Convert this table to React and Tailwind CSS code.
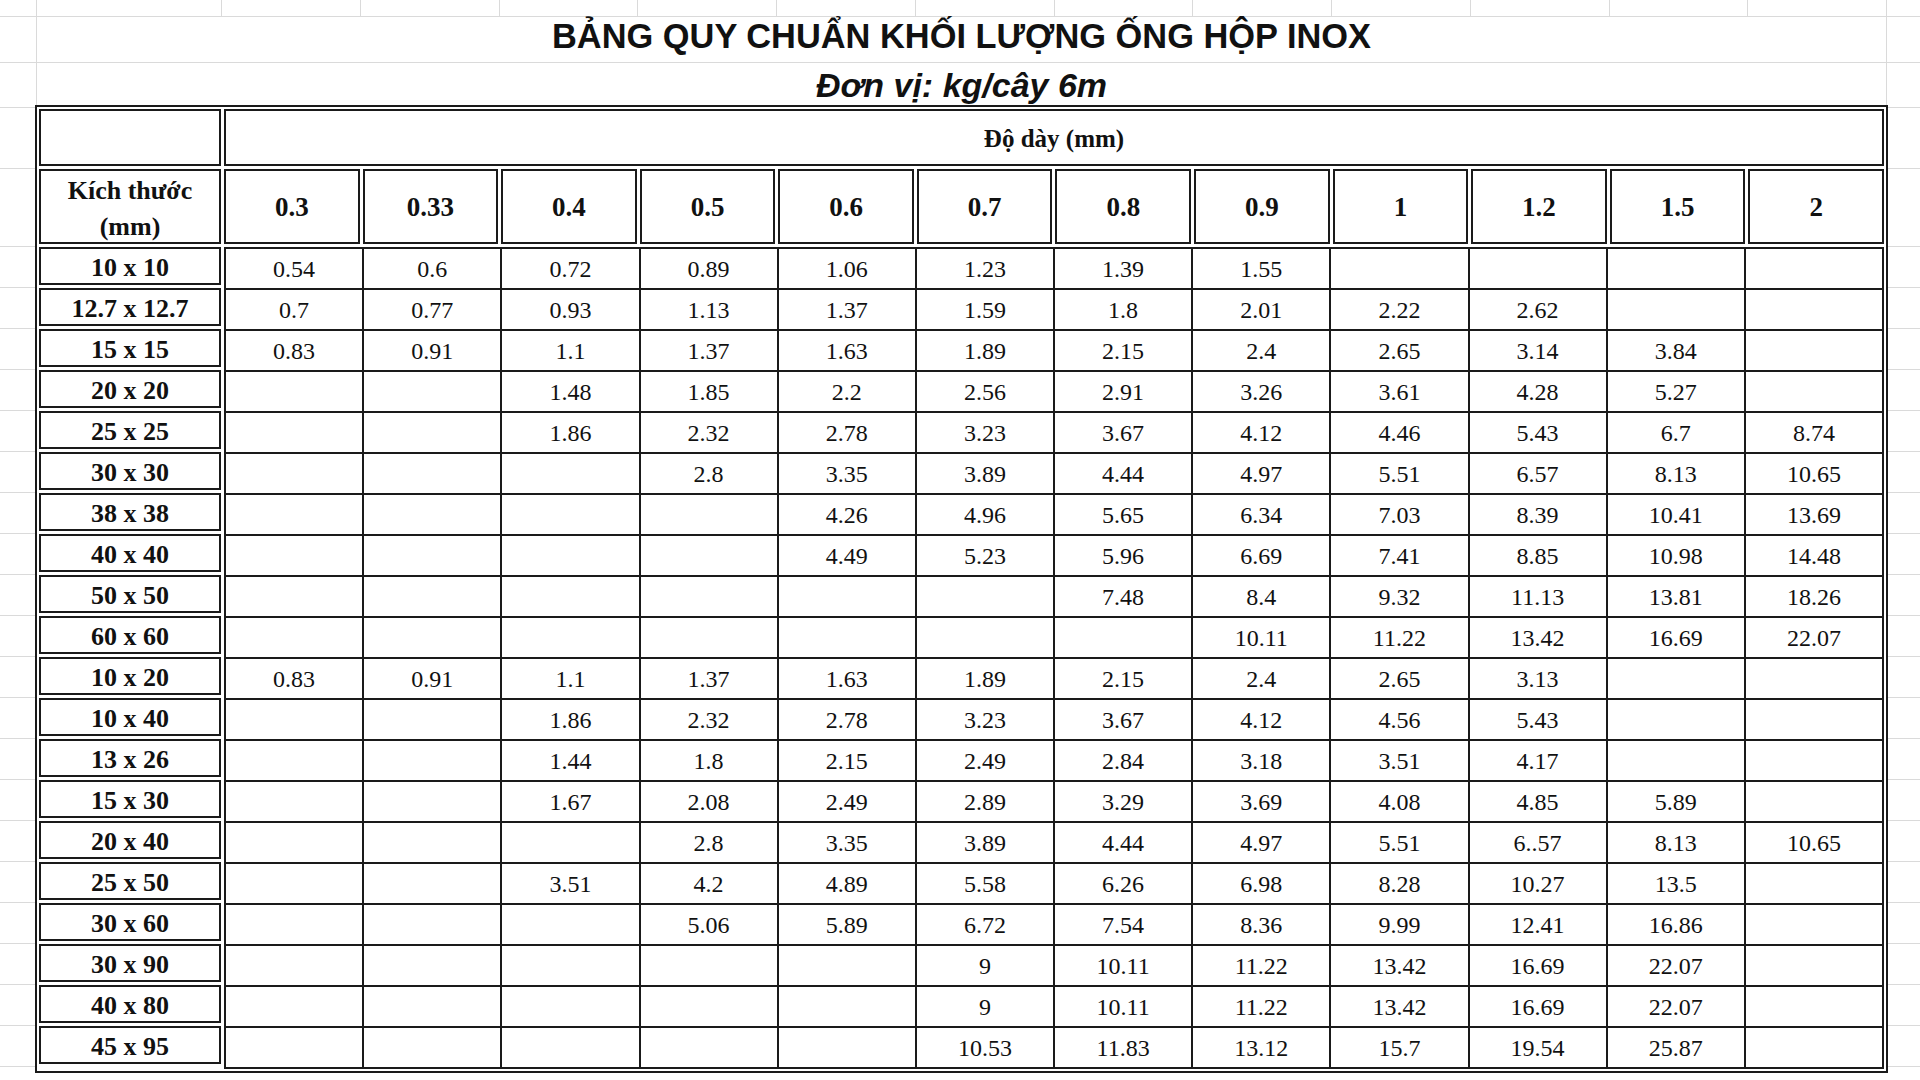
// App.jsx
const COLS = ['0.3', '0.33', '0.4', '0.5', '0.6', '0.7', '0.8', '0.9', '1', '1.2', '1.5', '2']

const ROWS = [
  ['10 x 10', ['0.54', '0.6', '0.72', '0.89', '1.06', '1.23', '1.39', '1.55', '', '', '', '']],
  ['12.7 x 12.7', ['0.7', '0.77', '0.93', '1.13', '1.37', '1.59', '1.8', '2.01', '2.22', '2.62', '', '']],
  ['15 x 15', ['0.83', '0.91', '1.1', '1.37', '1.63', '1.89', '2.15', '2.4', '2.65', '3.14', '3.84', '']],
  ['20 x 20', ['', '', '1.48', '1.85', '2.2', '2.56', '2.91', '3.26', '3.61', '4.28', '5.27', '']],
  ['25 x 25', ['', '', '1.86', '2.32', '2.78', '3.23', '3.67', '4.12', '4.46', '5.43', '6.7', '8.74']],
  ['30 x 30', ['', '', '', '2.8', '3.35', '3.89', '4.44', '4.97', '5.51', '6.57', '8.13', '10.65']],
  ['38 x 38', ['', '', '', '', '4.26', '4.96', '5.65', '6.34', '7.03', '8.39', '10.41', '13.69']],
  ['40 x 40', ['', '', '', '', '4.49', '5.23', '5.96', '6.69', '7.41', '8.85', '10.98', '14.48']],
  ['50 x 50', ['', '', '', '', '', '', '7.48', '8.4', '9.32', '11.13', '13.81', '18.26']],
  ['60 x 60', ['', '', '', '', '', '', '', '10.11', '11.22', '13.42', '16.69', '22.07']],
  ['10 x 20', ['0.83', '0.91', '1.1', '1.37', '1.63', '1.89', '2.15', '2.4', '2.65', '3.13', '', '']],
  ['10 x 40', ['', '', '1.86', '2.32', '2.78', '3.23', '3.67', '4.12', '4.56', '5.43', '', '']],
  ['13 x 26', ['', '', '1.44', '1.8', '2.15', '2.49', '2.84', '3.18', '3.51', '4.17', '', '']],
  ['15 x 30', ['', '', '1.67', '2.08', '2.49', '2.89', '3.29', '3.69', '4.08', '4.85', '5.89', '']],
  ['20 x 40', ['', '', '', '2.8', '3.35', '3.89', '4.44', '4.97', '5.51', '6..57', '8.13', '10.65']],
  ['25 x 50', ['', '', '3.51', '4.2', '4.89', '5.58', '6.26', '6.98', '8.28', '10.27', '13.5', '']],
  ['30 x 60', ['', '', '', '5.06', '5.89', '6.72', '7.54', '8.36', '9.99', '12.41', '16.86', '']],
  ['30 x 90', ['', '', '', '', '', '9', '10.11', '11.22', '13.42', '16.69', '22.07', '']],
  ['40 x 80', ['', '', '', '', '', '9', '10.11', '11.22', '13.42', '16.69', '22.07', '']],
  ['45 x 95', ['', '', '', '', '', '10.53', '11.83', '13.12', '15.7', '19.54', '25.87', '']],
]

const serif = { fontFamily: '"Liberation Serif", "Times New Roman", serif' }
const sans = { fontFamily: '"Liberation Sans", Arial, sans-serif' }

// excel gridlines on the sides of the table
function Gutter({ w }) {
  return (
    <div className={`${w} flex flex-col shrink-0`}>
      <div className="h-[3px] border-b border-[#dadada]" />
      <div className="h-[61px] border-b border-[#dadada]" />
      <div className="h-[78px] border-b border-[#dadada]" />
      {ROWS.map((r, i) => <div key={i} className="h-[41px] border-b border-[#dadada]" />)}
    </div>
  )
}

export default function App() {
  return (
    <div className="w-[1920px] h-[1080px] bg-white overflow-hidden text-[#111]" style={serif}>
      {/* top sheet row */}
      <div className="h-[17px] flex border-b border-[#dadada]">
        <div className="w-[37px] border-r border-[#dadada]" />
        <div className="w-[185px] border-r border-[#dadada]" />
        {COLS.map(c => <div key={c} className="w-[138.75px] border-r border-[#dadada]" />)}
        <div className="flex-1" />
      </div>

      {/* title */}
      <div className="h-[46px] flex border-b border-[#dadada]">
        <div className="w-[37px] border-r border-[#dadada]" />
        <div className="w-[1850px] border-r border-[#dadada] text-center text-[34.4px] leading-[38px] font-bold" style={sans}>
          BẢNG QUY CHUẨN KHỐI LƯỢNG ỐNG HỘP INOX
        </div>
        <div className="flex-1" />
      </div>

      {/* unit */}
      <div className="h-[42px] flex">
        <div className="w-[37px] border-r border-[#dadada]" />
        <div className="w-[1850px] border-r border-[#dadada] text-center text-[34px] leading-[38px] font-bold italic pt-[3px]" style={sans}>
          Đơn vị: kg/cây 6m
        </div>
        <div className="flex-1" />
      </div>

      <div className="flex">
        <Gutter w="w-[35px]" />

        <div className="w-[1853px] shrink-0 border-2 border-[#1a1a1a] p-[2px] flex flex-col gap-[3px]">
          <div className="flex gap-[3px] h-[57px]">
            <div className="w-[182px] border-2 border-[#1a1a1a]" />
            <div className="flex-1 border-2 border-[#1a1a1a] flex items-center justify-center text-[25px] font-bold pt-[2px]">
              Độ dày (mm)
            </div>
          </div>

          <div className="flex gap-[3px] h-[75px]">
            <div className="w-[182px] border-2 border-[#1a1a1a] flex flex-col items-center justify-center text-[26px] leading-[36px] font-bold pt-[4px]">
              <span>Kích thước</span>
              <span>(mm)</span>
            </div>
            {COLS.map(c => (
              <div key={c} className="flex-1 border-2 border-[#1a1a1a] flex items-center justify-center text-[27px] font-bold pt-[2px]">
                {c}
              </div>
            ))}
          </div>

          <div className="flex gap-[3px]">
            <div className="w-[182px] flex flex-col gap-[3px]">
              {ROWS.map(([label]) => (
                <div key={label} className="h-[38px] border-2 border-[#1a1a1a] flex items-center justify-center text-[26px] font-bold pt-[2px]">
                  {label}
                </div>
              ))}
            </div>
            <div className="flex-1 grid grid-cols-12 border-l-2 border-t-2 border-[#1a1a1a]">
              {ROWS.map(([label, vals]) =>
                vals.map((v, j) => (
                  <div key={label + j} className="h-[41px] border-r-2 border-b-2 border-[#1a1a1a] flex items-center justify-center text-[24px]">
                    {v}
                  </div>
                ))
              )}
            </div>
          </div>
        </div>

        <Gutter w="flex-1" />
      </div>
    </div>
  )
}
